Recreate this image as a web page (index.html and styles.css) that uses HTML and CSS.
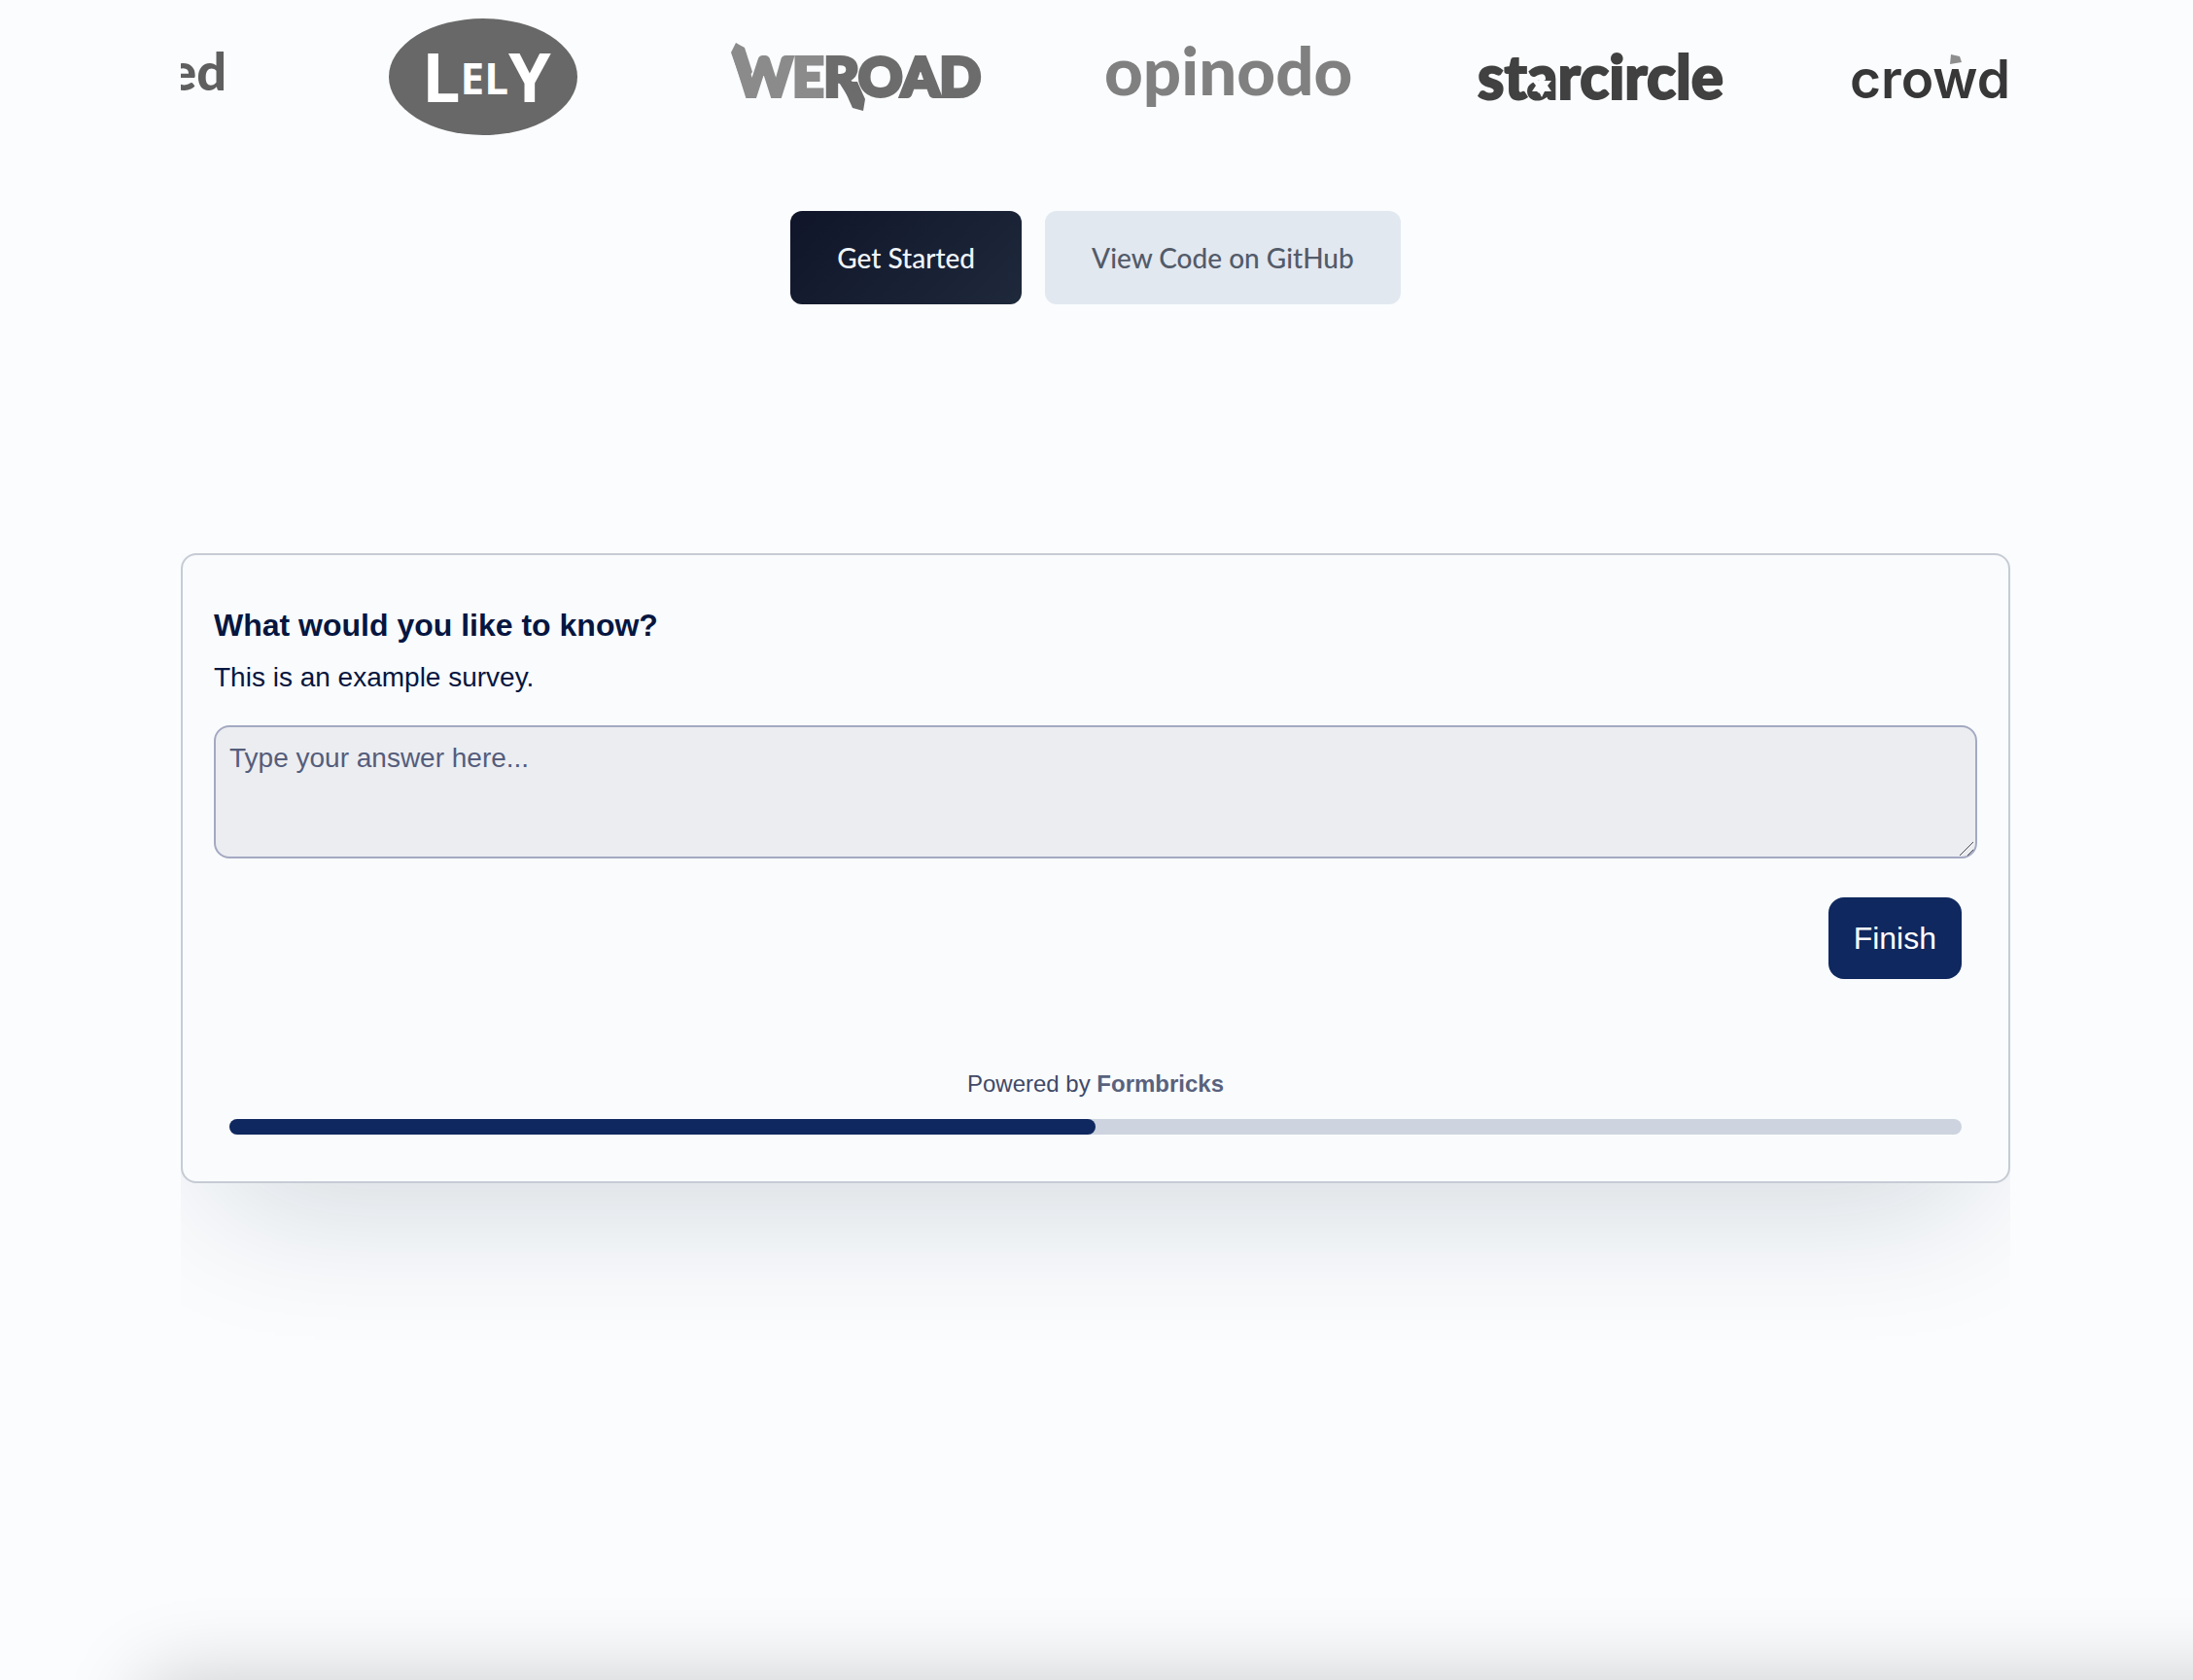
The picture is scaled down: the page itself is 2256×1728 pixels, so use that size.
FILE: index.html
```html
<!DOCTYPE html>
<html lang="en">
<head>
<meta charset="utf-8">
<meta name="viewport" content="width=device-width, initial-scale=1">
<title>Formbricks</title>
<link rel="stylesheet" href="styles.css">
</head>
<body>
<main class="page">
  <section class="logos" aria-label="Customers">
    <div class="track">
      <svg class="logo" viewBox="0 0 256 160" role="img" aria-label="Flixbed">
        <text class="word word-ed" x="249" y="93" text-anchor="end">ed</text>
      </svg>
      <svg class="logo" viewBox="0 0 256 160" role="img" aria-label="Lely">
        <ellipse cx="129" cy="79" rx="97" ry="60" fill="#686868"/>
        <text class="word word-lely" x="66" y="105"><tspan class="lely-tall">L</tspan><tspan class="lely-short" dy="-8">EL</tspan><tspan class="lely-tall" dy="8">Y</tspan></text>
      </svg>
      <svg class="logo" viewBox="0 0 256 160" role="img" aria-label="WeRoad">
        <path d="M0 54 5 44 14 49 22 74 12 88Z" fill="#8b8b8b"/>
        <path d="M113 84 130 84 138 102 136 114 125 111Z" fill="#6c6c6c"/>
        <text class="word word-weroad" x="4" y="99"><tspan class="we">WE</tspan><tspan class="road">ROAD</tspan></text>
      </svg>
      <svg class="logo" viewBox="0 0 256 160" role="img" aria-label="opinodo">
        <text class="word word-opinodo" x="0" y="98">opinodo</text>
      </svg>
      <svg class="logo" viewBox="0 0 256 160" role="img" aria-label="starcircle">
        <text class="word word-starcircle" x="0" y="102">starcircle</text>
        <path d="M66 77 69 83 76 83 72 88 76 94 69 94 66 100 63 94 56 94 60 88 56 83 63 83Z" fill="#fafcfe"/>
      </svg>
      <svg class="logo" viewBox="0 0 256 160" role="img" aria-label="crowd.dev">
        <text class="word word-crowd" x="-1" y="101">crowd</text>
        <path d="M103 56 112 58 114 64 102 66Z" fill="#8e8e8e"/>
      </svg>
    </div>
  </section>

  <div class="actions">
    <button type="button" class="btn btn-dark">Get Started</button>
    <button type="button" class="btn btn-light">View Code on GitHub</button>
  </div>

  <form class="card">
    <label class="question" for="answer">What would you like to know?</label>
    <p class="hint" id="hint">This is an example survey.</p>
    <div class="field">
      <textarea class="answer" id="answer" rows="3" aria-describedby="hint" placeholder="Type your answer here..."></textarea>
      <svg class="grip" viewBox="0 0 16 16" aria-hidden="true"><path d="M1 15 15 1M9 15 15 9"/></svg>
    </div>
    <div class="submit"><button type="button" class="finish">Finish</button></div>
    <p class="powered">Powered by <a href="#">Formbricks</a></p>
    <div class="progress" role="progressbar" aria-label="Survey progress" aria-valuenow="50" aria-valuemin="0" aria-valuemax="100">
      <div class="bar" style="width: 50%"></div>
    </div>
  </form>
</main>
</body>
</html>
```

FILE: styles.css
```css
* { box-sizing: border-box; }

body {
  margin: 0;
  background: #fafcfe;
  font-family: "Liberation Sans", Arial, sans-serif;
  color: #06163f;
}

.page {
  position: relative;
  min-height: 100vh;
  padding: 0 188px 0 186px;
  overflow: hidden;
}

/* Shadow of the panel that follows below the fold */
.page::after {
  content: "";
  position: absolute;
  top: 100%;
  left: 150px;
  right: -160px;
  height: 400px;
  box-shadow: 0 0 80px rgba(0, 0, 0, 0.2);
}

.logos { overflow: hidden; }

.track {
  display: flex;
  gap: 128px;
  margin-left: -202px;
}

.logo {
  flex: none;
  width: 256px;
  height: 160px;
  overflow: visible;
}

.word { font-family: Lato, sans-serif; font-weight: 900; }
.word-ed { font-size: 54px; fill: #5f5f5f; }
.word-lely { font-family: "Open Sans", sans-serif; font-weight: 700; fill: #fff; }
.lely-tall { font-size: 70px; }
.lely-short { font-size: 44px; }
.word-weroad { font-size: 56px; stroke-width: 4px; }
.we { fill: #8b8b8b; stroke: #8b8b8b; }
.road { fill: #6c6c6c; stroke: #6c6c6c; }
.word-opinodo { font-size: 69px; fill: #808080; }
.word-starcircle { font-size: 62px; fill: #414141; stroke: #414141; stroke-width: 2px; }
.word-crowd { font-family: Inter, sans-serif; font-size: 55px; font-weight: 600; fill: #373737; }

.actions {
  display: flex;
  justify-content: center;
  gap: 24px;
  margin-top: 57px;
}

.btn {
  height: 96px;
  padding: 0 48px;
  border: 0;
  border-radius: 12px;
  font: 500 28px/40px Lato, sans-serif;
}
.btn-dark { background: linear-gradient(135deg, #101529, #1e293b); color: #f1f5fb; }
.btn-light { background: #e2e8f0; color: #525b69; }

.card {
  display: flex;
  flex-direction: column;
  margin-top: 256px;
  padding: 48px 32px;
  border: 2px solid #c6cbd4;
  border-radius: 16px;
  background: #f9fbfd;
  box-shadow: 0 60px 140px -40px rgba(15, 23, 42, 0.16);
  clip-path: inset(0 0 -200px 0);
}

.question { font-size: 32px; font-weight: 700; line-height: 48px; }
.hint { margin: 10px 0 0; font-size: 28px; line-height: 40px; }

.field { position: relative; margin-top: 29px; }

.answer {
  display: block;
  width: 100%;
  height: 137px;
  padding: 12px 14px;
  border: 2px solid #a4a9c2;
  border-radius: 16px;
  background: #ecedf1;
  color: inherit;
  font: 28px/40px "Liberation Sans", Arial, sans-serif;
  resize: both;
}
.answer::placeholder { color: #555d7b; opacity: 1; }
.answer::-webkit-resizer { background: transparent; }

.grip {
  position: absolute;
  right: 3px;
  bottom: 2px;
  width: 16px;
  height: 16px;
  fill: none;
  stroke: #4a4c52;
  stroke-width: 1;
  pointer-events: none;
}

.submit { display: flex; justify-content: flex-end; margin: 40px 16px 0; }
.finish {
  height: 84px;
  padding: 0 26px;
  border: 0;
  border-radius: 16px;
  background: #0f285f;
  color: #fff;
  font: 32px/48px "Liberation Sans", Arial, sans-serif;
}

.powered { margin: 92px 0 0; font-size: 24px; line-height: 32px; text-align: center; color: #404966; }
.powered a { color: #58627d; font-weight: 700; text-decoration: none; }

.progress {
  height: 16px;
  margin: 20px 16px 0;
  border-radius: 8px;
  background: #cdd3df;
}
.bar { height: 100%; border-radius: 8px; background: #0f285f; }
```
